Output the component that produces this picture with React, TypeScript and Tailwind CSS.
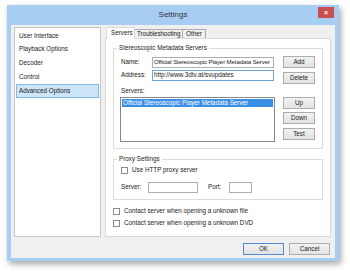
import React from 'react';

const sideItems = ['User Interface', 'Playback Options', 'Decoder', 'Control', 'Advanced Options'];

function Btn({label, def = false, wide = false}: {label: string; def?: boolean; wide?: boolean}) {
    return (
        <div
            className={`flex items-center justify-center h-[12px] border bg-linear-to-b from-[#f2f2f2] to-[#e3e3e3] text-[6.3px] leading-none text-[#1a1a1a] ${wide ? 'w-[41px]' : 'w-[32px]'} ${def ? 'border-[#4f8ed0]' : 'border-[#adadad]'}`}
        >
            {label}
        </div>
    );
}

function Check({label}: {label: string}) {
    return (
        <div className="flex items-center h-[7px]">
            <div className="w-[7px] h-[7px] bg-white border border-[#8a8a8a]"/>
            <span className="ml-[4px] text-[6.3px] leading-none text-[#1a1a1a]">{label}</span>
        </div>
    );
}

export default function App() {
    return (
        <div className="w-[350px] h-[275px] bg-white overflow-hidden pt-[5px] pl-[7px] font-['Liberation_Sans',Arial,sans-serif]">
            <div className="w-[332px] h-[256px] bg-[#a8cdf3] flex flex-col shadow-[2px_3px_6px_rgba(0,0,0,0.35)]">
                {/* title bar */}
                <div className="h-[20px] flex items-start">
                    <div className="w-[21px]"/>
                    <div className="flex-1 h-[20px] flex items-center justify-center text-[8px] text-[#333]">Settings</div>
                    <div className="mt-[2px] mr-[5px] w-[16px] h-[11px] bg-[#c94f4f] flex items-center justify-center text-white text-[7px] font-bold leading-none">
                        ×
                    </div>
                </div>

                {/* client area */}
                <div className="mx-[4px] mb-[3px] flex-1 bg-[#f0f0f0] flex flex-col">
                    <div className="flex pt-[2px] pl-[3px]">
                        {/* category list */}
                        <div className="w-[87px] h-[210px] bg-white border border-[#c6c6c6] pt-[1px] px-[1px]">
                            {sideItems.map((item, i) => (
                                <div
                                    key={item}
                                    className={`h-[13.75px] flex items-center text-[6.3px] leading-none text-[#1a1a1a] ${i === 4 ? 'bg-[#cde6f7] border border-[#84b9e3] pl-[2px]' : 'pl-[3px]'}`}
                                >
                                    {item}
                                </div>
                            ))}
                        </div>

                        {/* tabs */}
                        <div className="ml-[4px] flex flex-col">
                            <div className="flex items-end h-[11px] pl-[1px]">
                                <div className="relative z-10 -mb-px w-[29px] h-[12px] bg-white border border-b-0 border-[#d9d9d9] flex items-center pl-[4px] text-[6.3px] leading-none text-[#1a1a1a]">
                                    Servers
                                </div>
                                <div className="w-[48px] h-[9px] bg-[#f0f0f0] border border-b-0 border-l-0 border-[#acacac] flex items-center pl-[2px] tracking-[-0.1px] whitespace-nowrap text-[6.3px] leading-none text-[#1a1a1a]">
                                    Troubleshooting
                                </div>
                                <div className="w-[23px] h-[9px] bg-[#f0f0f0] border border-b-0 border-l-0 border-[#acacac] flex items-center pl-[3px] text-[6.3px] leading-none text-[#1a1a1a]">
                                    Other
                                </div>
                            </div>

                            <div className="w-[226px] h-[199px] bg-white border border-[#d9d9d9] pl-[7px]">
                                <fieldset className="mt-[5px] w-[210px] border border-[#dcdcdc] pb-[6px]">
                                    <legend className="ml-[3px] px-[2px] text-[6.3px] leading-[8px] text-[#1a1a1a]">
                                        Stereoscopic Metadata Servers
                                    </legend>
                                    <div className="flex pt-[5px] pl-[7px]">
                                        <div className="flex flex-col w-[153px]">
                                            <div className="flex items-center h-[11px]">
                                                <span className="w-[31px] text-[6.3px] leading-none text-[#1a1a1a]">Name:</span>
                                                <div className="w-[122px] h-[11px] border border-[#abadb3] bg-white flex items-center pl-[1px] overflow-hidden whitespace-nowrap tracking-[-0.12px] text-[6.1px] leading-none text-[#1a1a1a]">
                                                    Official Stereoscopic Player Metadata Server
                                                </div>
                                            </div>
                                            <div className="flex items-center h-[11px] mt-[2px]">
                                                <span className="w-[31px] text-[6.3px] leading-none text-[#1a1a1a]">Address:</span>
                                                <div className="w-[122px] h-[11px] border border-[#6fa3d8] bg-white flex items-center pl-[1px] overflow-hidden whitespace-nowrap text-[6.3px] leading-none text-[#1a1a1a]">
                                                    http://www.3dtv.at/svupdates
                                                </div>
                                            </div>
                                            <div className="mt-[6px] h-[8px] flex items-center text-[6.3px] leading-none text-[#1a1a1a]">Servers:</div>
                                            <div className="mt-[2px] -ml-px w-[155px] h-[45px] border border-[#828790] bg-white p-px">
                                                <div className="h-[8px] bg-[#3a8ee6] flex items-center pl-[1px] text-[6.3px] leading-none text-white whitespace-nowrap">
                                                    Official Stereoscopic Player Metadata Server
                                                </div>
                                            </div>
                                        </div>
                                        <div className="ml-[9px] -mt-px flex flex-col">
                                            <Btn label="Add"/>
                                            <div className="mt-[4px]"><Btn label="Delete"/></div>
                                            <div className="mt-[13px]"><Btn label="Up"/></div>
                                            <div className="mt-[3px]"><Btn label="Down"/></div>
                                            <div className="mt-[4px]"><Btn label="Test"/></div>
                                        </div>
                                    </div>
                                </fieldset>

                                <fieldset className="mt-[6px] w-[210px] border border-[#dcdcdc] pb-[6px]">
                                    <legend className="ml-[3px] px-[2px] text-[6.3px] leading-[8px] text-[#1a1a1a]">
                                        Proxy Settings
                                    </legend>
                                    <div className="pl-[7px] pt-[4px]">
                                        <Check label="Use HTTP proxy server"/>
                                        <div className="mt-[8px] flex items-center h-[11px]">
                                            <span className="w-[27px] text-[6.3px] leading-none text-[#1a1a1a]">Server:</span>
                                            <div className="w-[50px] h-[11px] border border-[#abadb3] bg-white"/>
                                            <span className="ml-[10px] w-[21px] text-[6.3px] leading-none text-[#1a1a1a]">Port:</span>
                                            <div className="w-[23px] h-[11px] border border-[#abadb3] bg-white"/>
                                        </div>
                                    </div>
                                </fieldset>

                                <div className="mt-[8px]">
                                    <Check label="Contact server when opening a unknown file"/>
                                </div>
                                <div className="mt-[5px]">
                                    <Check label="Contact server when opening a unknown DVD"/>
                                </div>
                            </div>
                        </div>
                    </div>

                    {/* dialog buttons */}
                    <div className="mt-[6px] pr-[5px] flex justify-end gap-[5px]">
                        <Btn label="OK" def wide/>
                        <Btn label="Cancel" wide/>
                    </div>
                </div>
            </div>
        </div>
    );
}
